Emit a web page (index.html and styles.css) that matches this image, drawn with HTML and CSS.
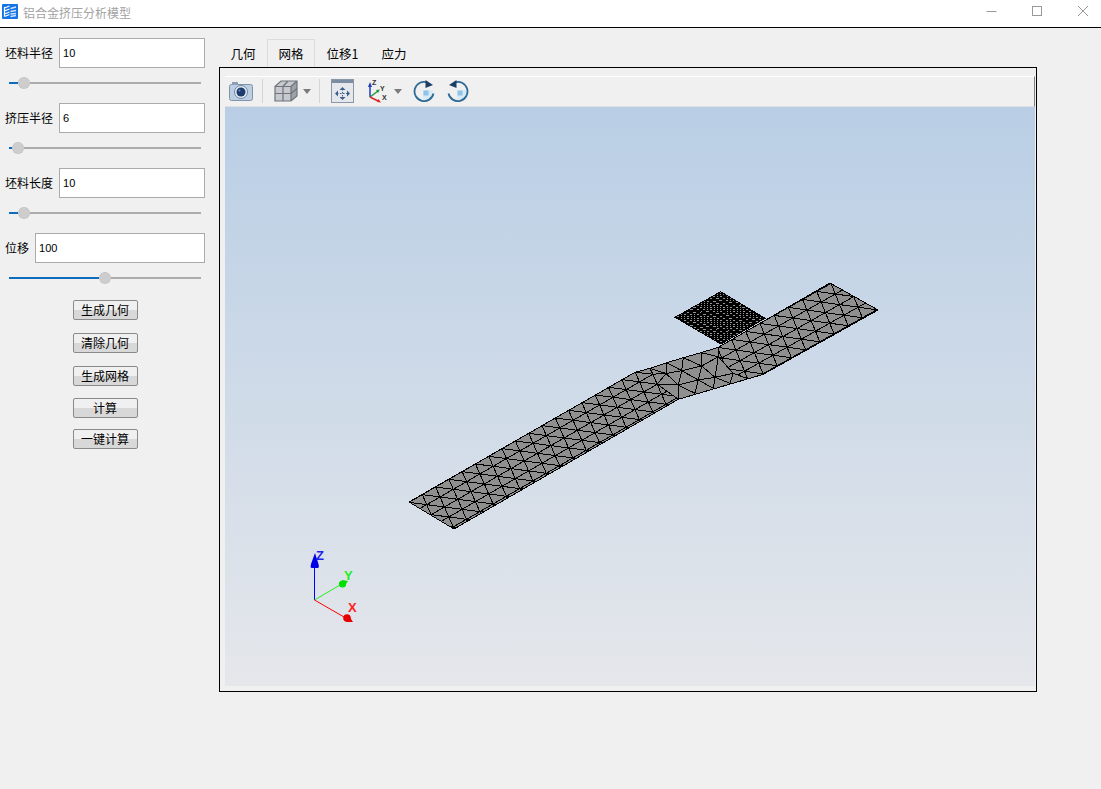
FILE: index.html
```html
<!DOCTYPE html>
<html lang="zh">
<head>
<meta charset="utf-8">
<title>铝合金挤压分析模型</title>
<link rel="stylesheet" href="styles.css">
</head>
<body>
<header class="titlebar">
  <svg class="app-icon" width="16" height="15" viewBox="0 0 16 15">
    <rect width="16" height="15" rx="1" fill="#1473e6"/>
    <path d="M2.500 3v9.500M2.500 4l5-2M2.500 7l5-2M2.500 10l5-2M2.500 12.500l5-2" stroke="#fff" stroke-width="1.200" fill="none"/>
    <path d="M8.500 4.500l5.500-1.500M8.500 7.500l5.500-1M8.500 10l5.500-.5M8.500 12.500l5.500-1" stroke="#cfe3fb" stroke-width="1.300" fill="none"/>
  </svg>
  <span class="app-title">铝合金挤压分析模型</span>
  <div class="win-controls">
    <svg class="win-btn" width="12" height="12" viewBox="0 0 12 12"><path d="M1.500 5.500h10" stroke="#9a9a9a"/></svg>
    <svg class="win-btn" width="12" height="12" viewBox="0 0 12 12"><rect x="1.500" y=".5" width="9" height="9" fill="none" stroke="#9a9a9a"/></svg>
    <svg class="win-btn" width="12" height="12" viewBox="0 0 12 12"><path d="M1 0l10 10M11 0L1 10" stroke="#9a9a9a" fill="none"/></svg>
  </div>
</header>

<main class="main">
  <aside class="sidebar">
    <section class="param">
      <div class="field"><label class="field-label">坯料半径</label><input class="field-input" value="10"></div>
      <div class="slider"><span class="slider-fill" style="width:9px"></span><span class="slider-knob"></span><span class="slider-rest"></span></div>
    </section>
    <section class="param">
      <div class="field"><label class="field-label">挤压半径</label><input class="field-input" value="6"></div>
      <div class="slider"><span class="slider-fill" style="width:3px"></span><span class="slider-knob"></span><span class="slider-rest"></span></div>
    </section>
    <section class="param">
      <div class="field"><label class="field-label">坯料长度</label><input class="field-input" value="10"></div>
      <div class="slider"><span class="slider-fill" style="width:9px"></span><span class="slider-knob"></span><span class="slider-rest"></span></div>
    </section>
    <section class="param">
      <div class="field"><label class="field-label">位移</label><input class="field-input" value="100"></div>
      <div class="slider"><span class="slider-fill" style="width:90px"></span><span class="slider-knob"></span><span class="slider-rest"></span></div>
    </section>
    <div class="actions">
      <button class="action">生成几何</button>
      <button class="action">清除几何</button>
      <button class="action">生成网格</button>
      <button class="action action-tight">计算</button>
      <button class="action action-tighter">一键计算</button>
    </div>
  </aside>

  <section class="workspace">
    <nav class="tabs">
      <span class="tab">几何</span>
      <span class="tab tab-active">网格</span>
      <span class="tab">位移1</span>
      <span class="tab">应力</span>
    </nav>
    <div class="frame">
      <div class="toolbar">
        <svg class="tool tool-camera" width="24" height="20" viewBox="0 0 24 20">
          <rect x=".5" y="3.500" width="23" height="16" rx="2" fill="#bccfe2" stroke="#7f93aa"/>
          <rect x="3" y="1" width="6" height="3" fill="#8ba0b8"/>
          <circle cx="12" cy="11" r="6.500" fill="#e3ebf3" stroke="#6f87a3"/>
          <circle cx="12" cy="11" r="4.500" fill="#1e3b6e"/>
          <circle cx="10.500" cy="9.500" r="1" fill="#6f8fbf"/>
        </svg>
        <span class="tool-sep tool-sep-a"></span>
        <svg class="tool tool-cube" width="24" height="22" viewBox="0 0 24 22">
          <path d="M1 6.500l6-5.500h16v15l-6 5H1z" fill="#c6c9ce"/>
          <path d="M17 6.500l6-5.500v15l-6 5z" fill="#9da2a8"/>
          <path d="M1 6.500l6-5.500h16v15l-6 5H1zM1 6.500h16v14.500M17 6.500l6-5.500M9 6.500V21M1 13.500h16M17 13.500l6-5M14 1l-5 5.500" fill="none" stroke="#6f747a" stroke-width="1.200"/>
        </svg>
        <svg class="tool tool-caret" width="8" height="5" viewBox="0 0 8 5"><path d="M0 0h8L4 5z" fill="#7b7b7b"/></svg>
        <span class="tool-sep tool-sep-b"></span>
        <svg class="tool tool-move" width="23" height="24" viewBox="0 0 23 24">
          <rect x=".5" y=".5" width="22" height="23" fill="#e4e8ed" stroke="#8a97a6"/>
          <rect x="1" y="1" width="21" height="3" fill="#7a8da3"/>
          <path d="M11.500 8l-3 3h6zM11.500 21l-3-3h6zM4 14.500l3-3v6zM19 14.500l-3-3v6z" fill="#3b5f88"/>
          <path d="M11.500 10v9M6 14.500h11" stroke="#3b5f88" stroke-dasharray="1.500 1.500"/>
        </svg>
        <svg class="tool tool-axes" width="22" height="24" viewBox="0 0 22 24">
          <path d="M2 18V7" stroke="#1e3fbf" stroke-width="1.500"/>
          <path d="M2 3L0 8h4z" fill="#1e3fbf"/>
          <path d="M2 18l8-6" stroke="#1f9a3f" stroke-width="1.500"/>
          <path d="M12 10.500l-4 .5 2 3z" fill="#1f9a3f"/>
          <path d="M2 18l8 4" stroke="#d22" stroke-width="1.500"/>
          <path d="M13 23.500l-4-.5 1.500-3z" fill="#d22"/>
          <text class="tool-axis-text" x="4" y="6">Z</text>
          <text class="tool-axis-text" x="12" y="12">Y</text>
          <text class="tool-axis-text" x="14" y="21">X</text>
        </svg>
        <svg class="tool tool-caret tool-caret-b" width="8" height="5" viewBox="0 0 8 5"><path d="M0 0h8L4 5z" fill="#7b7b7b"/></svg>
        <svg class="tool tool-rot-a" width="22" height="22" viewBox="0 0 22 22">
          <path d="M10 10h10a9.500 9.500 0 0 1-10 10z" fill="#d6eaf7"/>
          <path d="M10.500 10.500h5v5h-5z" fill="#8fc4e6"/>
          <path d="M14 2.300A9.600 9.600 0 1 0 20.500 13.500" fill="none" stroke="#2d6a94" stroke-width="1.800"/>
          <path d="M12.500 0l7.500 5-7.500 3z" fill="#1d3f66"/>
        </svg>
        <svg class="tool tool-rot-b" width="22" height="22" viewBox="0 0 22 22">
          <path d="M12 10H2a9.500 9.500 0 0 0 10 10z" fill="#d6eaf7" transform="matrix(-1 0 0 1 22 0)"/>
          <path d="M11.500 10.500h-5v5h5z" fill="#8fc4e6" transform="matrix(-1 0 0 1 22 0)"/>
          <path d="M8 2.300A9.600 9.600 0 1 1 1.500 13.500" fill="none" stroke="#2d6a94" stroke-width="1.800"/>
          <path d="M9.500 0L2 5l7.500 3z" fill="#1d3f66"/>
        </svg>
      </div>
      <div class="viewport">
        <svg class="scene" width="810" height="579" viewBox="225 107 810 579">
          <defs>
            <clipPath id="clip-a"><polygon points="409,502 635,372.300 652.800,374.200 657.200,384.200 678.300,399.300 454,529"/></clipPath>
            <clipPath id="clip-c"><polygon points="718.300,347.300 830,283 878,310 763.300,374.300 746.700,378.300 733.300,373.300 718.300,356.700"/></clipPath>
            <clipPath id="clip-d"><polygon points="675,317.300 720.700,291.700 765,318.300 721,344"/></clipPath>
          </defs>
          <polygon class="fine-fill" points="675,317.300 720.700,291.700 765,318.300 721,344"/>
          <g id="fine-mesh" class="mesh" clip-path="url(#clip-d)"></g>
          <polygon class="outline-thin" points="675,317.300 720.700,291.700 765,318.300 721,344"/>
          <path class="gap-line" d="M722 345.500L766 320"/>
          <polygon class="strip" points="409,502 635,372.300 650,368.300 666.700,362.700 683.300,357.700 701,352.700 718.300,347.300 830,283 878,310 763.300,374.300 678.300,399.300 454,529"/>
          <g id="mesh-a" class="mesh" clip-path="url(#clip-a)"></g>
          <g id="mesh-b" class="mesh"></g>
          <g id="mesh-c" class="mesh" clip-path="url(#clip-c)"></g>
          <polygon class="strip-edge" points="409,502 635,372.300 650,368.300 666.700,362.700 683.300,357.700 701,352.700 718.300,347.300 830,283 878,310 763.300,374.300 678.300,399.300 454,529"/>

          <path d="M314.500 600V565" stroke="#0000ff" fill="none"/>
          <path d="M315 553l3.500 11q1 3-.5 4h-6.500q-1.500-1-.5-4z" fill="#0000e6"/>
          <text class="axis-label" x="316" y="560" fill="#2222ee">Z</text>
          <path d="M314.500 600L340 585" stroke="#22ee22" fill="none"/>
          <circle cx="342.500" cy="584" r="3.600" fill="#00e000"/>
          <path d="M348 581l-6-1 2 7z" fill="#00e000"/>
          <text class="axis-label" x="344" y="580" fill="#22ee22">Y</text>
          <path d="M314.500 600L344 617" stroke="#ff0000" fill="none"/>
          <circle cx="347" cy="618" r="3.800" fill="#e60000"/>
          <path d="M353 622h-7l3-6z" fill="#e60000"/>
          <text class="axis-label" x="348" y="612" fill="#ff2222">X</text>
        </svg>
      </div>
    </div>
  </section>
</main>
<script src="mesh.js"></script>
</body>
</html>
```
FILE: styles.css
```css
* { box-sizing: border-box; }

html, body {
  margin: 0;
  height: 100%;
  overflow: hidden;
}

body {
  background: #f0f0f0;
  color: #000;
  font-family: "Noto Sans CJK SC", "Liberation Sans", sans-serif;
  font-size: 12px;
}

.titlebar {
  display: flex;
  align-items: center;
  height: 28px;
  padding-left: 2px;
  background: #fff;
  border-bottom: 1px solid #000;
}

.app-icon { flex: none; margin-bottom: 4px; }

.app-title {
  margin-left: 5px;
  margin-bottom: 2px;
  color: #a2a2a2;
  font-size: 12px;
}

.win-controls {
  display: flex;
  margin-left: auto;
  margin-right: 12px;
  margin-bottom: 3px;
  gap: 34px;
}

.win-btn { display: block; }

.main { display: flex; }

.sidebar {
  flex: none;
  width: 219px;
  padding: 10px 14px 0 5px;
}

.param { height: 65px; }

.field {
  display: flex;
  align-items: center;
  gap: 6px;
}

.field-label { flex: none; white-space: nowrap; line-height: 30px; }

.field-input {
  flex: 1;
  min-width: 0;
  height: 30px;
  padding: 0 3px;
  background: #fff;
  border: 1px solid #ababab;
  border-radius: 0;
  font-family: "Liberation Sans", sans-serif;
  font-size: 11px;
  color: #000;
}

.slider {
  display: flex;
  align-items: center;
  height: 12px;
  margin: 9px 4px 0 4px;
}

.slider-fill { flex: none; height: 2px; background: #0f6cbd; }

.slider-knob {
  flex: none;
  width: 12px;
  height: 12px;
  background: #cdcdcd;
  border: 1px dotted #bdbdbd;
  border-radius: 50%;
}

.slider-rest { flex: 1; height: 2px; background: #acacac; }

.actions {
  display: flex;
  flex-direction: column;
  align-items: center;
  margin-top: 2px;
  gap: 13px;
}

.action {
  width: 65px;
  height: 20px;
  padding: 0;
  background: linear-gradient(#f0f0f0 0 50%, #d8d8d8 50% 100%);
  border: 1px solid #8a8a8a;
  border-radius: 2px;
  color: #000;
  font-family: "Noto Sans CJK SC", sans-serif;
  font-size: 12px;
  line-height: 18px;
}

.action-tight { margin-top: -1px; }
.action-tighter { margin-top: -2px; }

.workspace { flex: none; width: 818px; }

.tabs {
  display: flex;
  height: 39px;
  padding-top: 11px;
}

.tab {
  height: 28px;
  padding: 0 10.500px;
  border: 1px solid transparent;
  border-bottom: 0;
  font-size: 12.500px;
  line-height: 27px;
}

.tab-active {
  background: #f0f0f0;
  border-color: #dcdcdc;
}

.frame {
  height: 625px;
  padding: 8px 1px 5px 5px;
  border: 1px solid #000;
  background: #f0f0f0;
}

.toolbar {
  display: flex;
  align-items: center;
  height: 31px;
  padding-left: 4px;
  padding-bottom: 2px;
  background: #f0f0f0;
  border-top: 1px solid #fff;
  border-right: 1px solid #808080;
  border-bottom: 1px solid #e0e0e0;
}

.tool { display: block; flex: none; }
.tool-sep { flex: none; width: 1px; height: 24px; background: #d5d5d5; }
.tool-sep-a { margin-left: 9px; }
.tool-cube { margin-left: 11px; }
.tool-caret { margin-left: 5px; margin-top: 2px; }
.tool-sep-b { margin-left: 8px; }
.tool-move { margin-left: 11px; }
.tool-axes { margin-left: 14px; }
.tool-caret-b { margin-left: 4px; }
.tool-rot-a { margin-left: 11px; }
.tool-rot-b { margin-left: 12px; }

.tool-axis-text {
  font-family: "Liberation Sans", sans-serif;
  font-size: 7px;
  font-weight: bold;
  fill: #333;
}

.viewport {
  height: 579px;
  background: linear-gradient(#b9cee5, #e5e7eb);
}

.scene { display: block; }

.strip { fill: #8f8f8f; stroke: none; }
.strip-edge { fill: none; stroke: #000; shape-rendering: crispEdges; }
.fine-fill { fill: #949494; }
.outline-thin { fill: none; stroke: #000; shape-rendering: crispEdges; }
.gap-line { stroke: #fff; fill: none; }
.mesh { stroke: #000; stroke-width: 1; fill: none; shape-rendering: crispEdges; }

.axis-label {
  font-family: "Liberation Sans", sans-serif;
  font-size: 13px;
  font-weight: bold;
}
```
FILE: mesh.js
```js
var NS = "http://www.w3.org/2000/svg";

function addLine(group, a, b) {
  var line = document.createElementNS(NS, "line");
  line.setAttribute("x1", a[0]);
  line.setAttribute("y1", a[1]);
  line.setAttribute("x2", b[0]);
  line.setAttribute("y2", b[1]);
  group.appendChild(line);
}

function lattice(id, origin, L, D, iMin, iMax, jMin, jMax) {
  var group = document.getElementById(id);
  function p(i, j) {
    return [origin[0] + L[0] * i + D[0] * j, origin[1] + L[1] * i + D[1] * j];
  }
  var i, j, k;
  for (j = jMin; j <= jMax; j++) addLine(group, p(iMin, j), p(iMax, j));
  for (i = iMin; i <= iMax; i++) addLine(group, p(i, jMin), p(i, jMax));
  for (k = iMin - jMax; k <= iMax - jMin; k++) addLine(group, p(k + jMin, jMin), p(k + jMax, jMax));
}

lattice("mesh-a", [453.3, 489.3], [13.3, -7.67], [4.4, 10], -6, 18, -2, 4);
lattice("mesh-c", [792.7, 318], [14.2, -8], [4.3, 10.6], -8, 6, -3, 5);

(function () {
  var n = 14;
  var o = [675, 317.3];
  var u = [45.7 / n, -25.6 / n];
  var v = [46 / n, 26.7 / n];
  lattice("fine-mesh", o, u, v, 0, n, 0, n);
})();

(function () {
  var t = [[635, 372.3], [650, 368.3], [666.7, 362.7], [683.3, 357.7], [701, 352.7], [718.3, 347.3]];
  var a = [[652.8, 374.2], [666, 373.5], [681.7, 370.7], [701.7, 366], [718.3, 356.7]];
  var b = [[657.2, 384.2], [678.3, 385], [698.3, 380], [715, 377.3], [733.3, 373.3]];
  var c = [[678.3, 399.3], [695, 393.3], [713.3, 388.3], [730, 383.3], [746.7, 378.3]];
  var g = document.getElementById("mesh-b");
  var i;
  for (i = 0; i < 5; i++) {
    addLine(g, t[i], a[i]);
    addLine(g, a[i], t[i + 1]);
    addLine(g, a[i], b[i]);
    addLine(g, b[i], c[i]);
    if (i > 0) addLine(g, b[i], c[i - 1]);
    if (i < 4) {
      addLine(g, a[i], a[i + 1]);
      addLine(g, b[i], b[i + 1]);
      addLine(g, b[i], a[i + 1]);
    }
  }
})();
```
